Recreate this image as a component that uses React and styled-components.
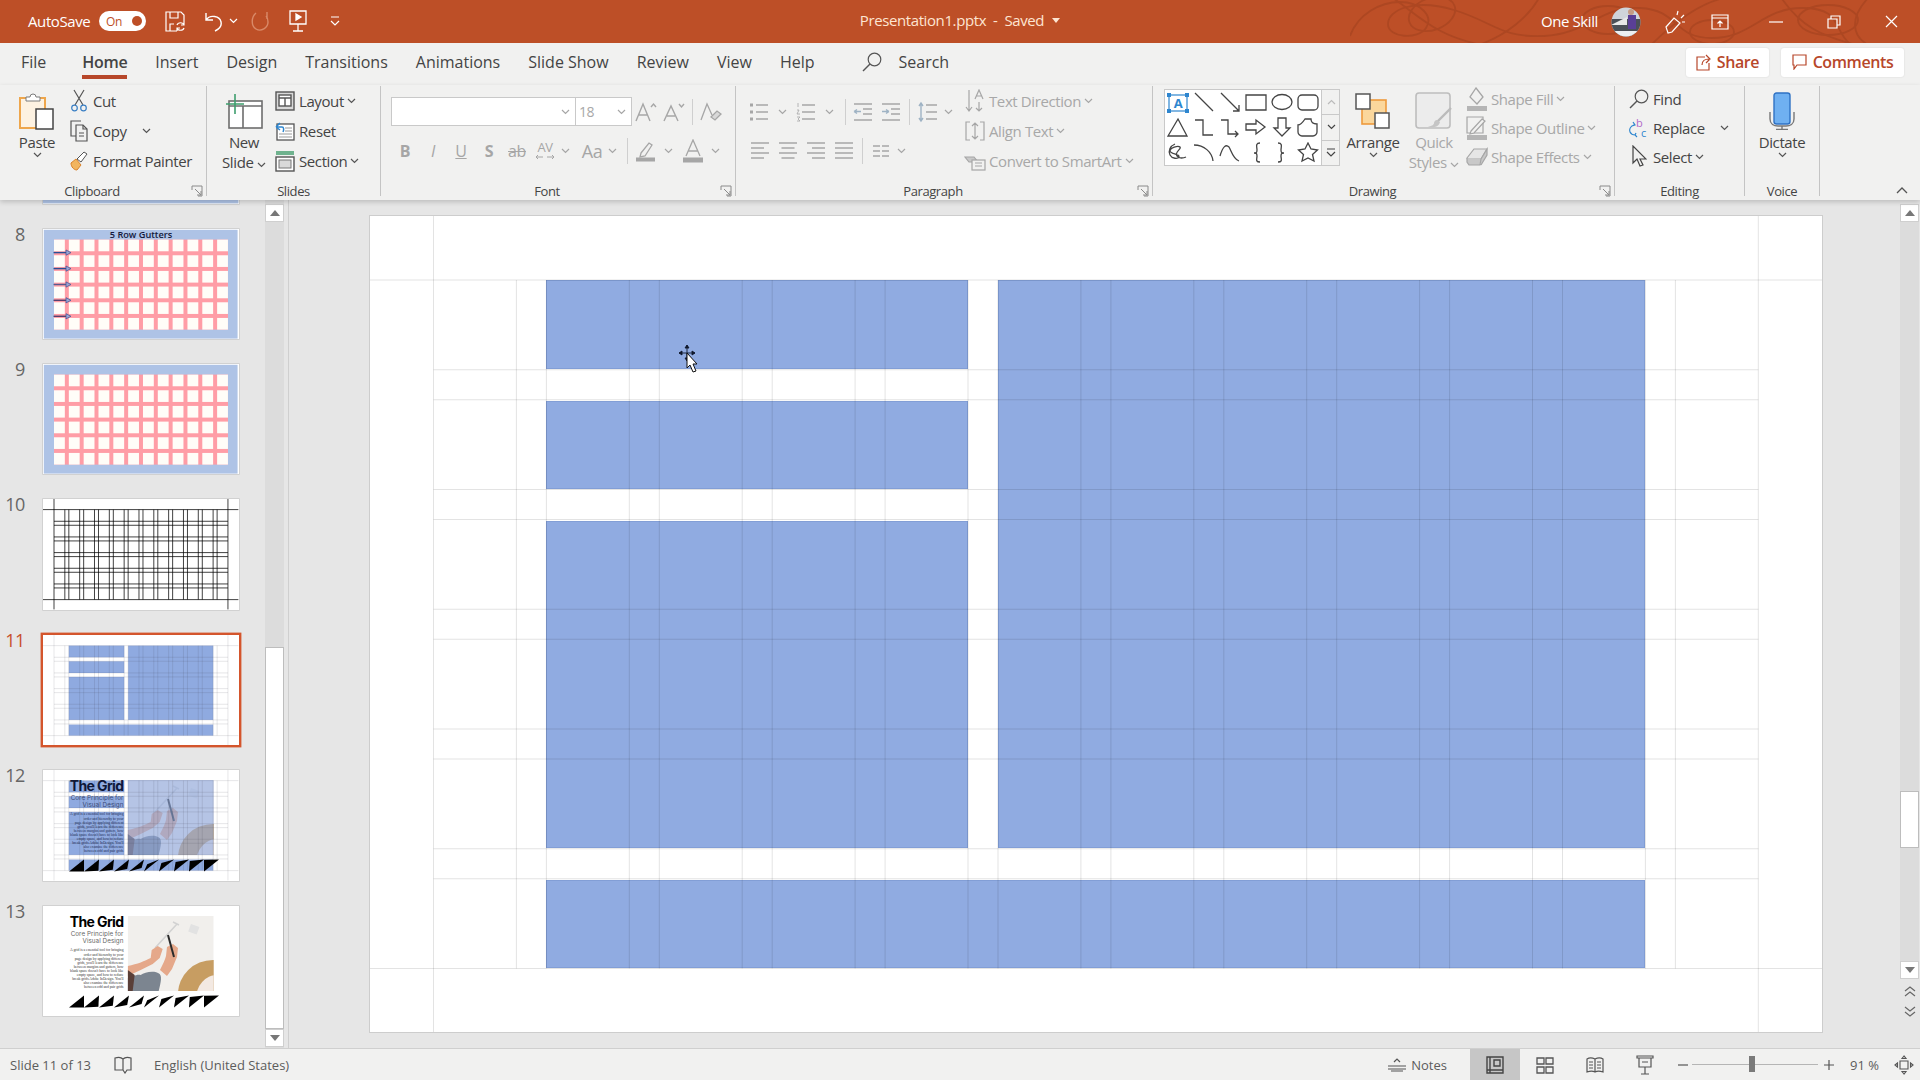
import React from 'react';
import styled, { createGlobalStyle } from 'styled-components';

const GlobalStyle = createGlobalStyle`
  html, body { margin: 0; padding: 0; overflow: hidden; background: #e6e6e6; }
  body { font-family: "Open Sans", "Noto Sans", sans-serif; letter-spacing: -0.025em; }
  * { box-sizing: border-box; }
`;

const Window = styled.div`
  width: 1920px;
  height: 1080px;
  display: flex;
  flex-direction: column;
  overflow: hidden;
`;

/* title bar */
const TitleBar = styled.header`
  position: relative;
  height: 43px;
  flex: none;
  background: #bd4f27;
  color: #fff;
  display: grid;
  grid-template-columns: 1fr auto 1fr;
  align-items: center;
`;
const TitleLeft = styled.div`
  display: flex;
  align-items: center;
  padding-left: 28px;
  margin-top: -1px;
`;
const TitleText = styled.div`
  font-size: 15px;
  color: #fde5d2;
  display: flex;
  align-items: center;
  gap: 8px;
  margin-top: -3px;
`;
const TitleRight = styled.div`
  height: 43px;
  display: flex;
  align-items: center;
  justify-content: flex-end;
`;
const AutoSaveLabel = styled.span`
  font-size: 15px;
  width: 71px;
`;
const Toggle = styled.div`
  width: 47px;
  height: 20px;
  border-radius: 10px;
  background: #fff;
  color: #bd4f27;
  font-size: 12px;
  display: flex;
  align-items: center;
  justify-content: space-between;
  padding: 0 4px 0 7px;
  &::after {
    content: '';
    width: 10px;
    height: 10px;
    border-radius: 50%;
    background: #bd4f27;
  }
`;
const QuickIcon = styled.div`
  margin-left: ${p => p.$ml}px;
  display: flex;
  align-items: center;
`;
const UserName = styled.span`
  position: relative;
  font-size: 15px;
  margin-right: 13px;
  margin-top: -2px;
`;
const TitleAction = styled.div`
  position: relative;
  width: ${p => p.$w}px;
  margin-left: ${p => p.$ml || 0}px;
  display: flex;
  justify-content: center;
`;
const PatternSvg = styled.svg`
  position: absolute;
  top: 0;
  right: 0;
`;

/* tabs */
const TabRow = styled.nav`
  height: 42px;
  flex: none;
  background: #f1f1f0;
  display: flex;
  align-items: center;
  padding: 0 16px 4px 21px;
  letter-spacing: 0;
`;
const Tab = styled.div`
  position: relative;
  font-size: 16px;
  color: #444;
  margin-right: ${p => p.$mr ?? 28}px;
  font-weight: ${p => p.$active ? 600 : 400};
  ${p => p.$active && `
    letter-spacing: -0.02em;
    &::after {
      content: '';
      position: absolute;
      left: 0;
      right: 0;
      bottom: -6px;
      height: 4px;
      background: #b7472a;
    }
  `}
`;
const SearchBox = styled.div`
  display: flex;
  align-items: center;
  gap: 17px;
  margin-left: 47px;
  font-size: 16px;
  color: #444;
`;
const HeadButtons = styled.div`
  margin-left: auto;
  display: flex;
  gap: 12px;
  letter-spacing: -0.025em;
`;
const HeadButton = styled.div`
  width: ${p => p.$w}px;
  height: 29px;
  background: #fff;
  border-radius: 3px;
  box-shadow: 0 0 2px rgba(0, 0, 0, .12);
  display: flex;
  align-items: center;
  justify-content: center;
  gap: 6px;
  color: #b7472a;
  font-size: 16px;
  font-weight: 600;
`;

/* ribbon */
const Ribbon = styled.section`
  position: relative;
  z-index: 2;
  height: 115px;
  flex: none;
  background: #f1f1f0;
  box-shadow: 0 2px 5px rgba(0, 0, 0, .18);
  display: flex;
  padding-top: 1px;
`;
const Group = styled.div`
  position: relative;
  width: ${p => p.$w}px;
  height: 110px;
  flex: none;
  border-right: 1px solid #c4c4c4;
  display: flex;
  flex-direction: column;
`;
const GroupBody = styled.div`
  height: 96px;
  display: flex;
  align-items: flex-start;
`;
const GroupLabel = styled.div`
  height: 14px;
  line-height: 18px;
  padding-right: ${p => p.$launch ? 22 : 0}px;
  text-align: center;
  font-size: 13px;
  color: #444;
  white-space: nowrap;
`;
const Launcher = styled.svg`
  position: absolute;
  right: 3px;
  bottom: -1px;
`;
const BigButton = styled.div`
  width: ${p => p.$w}px;
  margin-left: ${p => p.$ml || 0}px;
  padding-top: 6px;
  display: flex;
  flex-direction: column;
  align-items: center;
  flex: none;
  font-size: 15px;
  line-height: 20px;
  color: ${p => p.$off ? '#a8a8a8' : '#444'};
`;
const BigIcon = styled.div`
  height: 37px;
  margin-bottom: 3px;
  display: flex;
  align-items: center;
`;
const SmallColumn = styled.div`
  margin-left: ${p => p.$ml || 0}px;
  margin-top: ${p => p.$top ?? 0}px;
  flex: none;
  display: flex;
  flex-direction: column;
`;
const SmallRow = styled.div`
  height: ${p => p.$h || 30}px;
  display: flex;
  align-items: center;
  gap: 3px;
  font-size: 15px;
  white-space: nowrap;
  color: ${p => p.$off ? '#a8a8a8' : '#444'};
`;
const SmallIcon = styled.span`
  width: 22px;
  height: 22px;
  display: flex;
  align-items: center;
  justify-content: center;
  flex: none;
`;
const ChevronSvg = styled.svg`
  flex: none;
  color: ${p => p.$c || '#555'};
  margin-left: ${p => p.$ml || 0}px;
`;
const ToolRows = styled.div`
  flex: none;
  width: ${p => p.$w ? `${p.$w}px` : 'auto'};
  padding: 11px 0 0 ${p => p.$pl}px;
  display: flex;
  flex-direction: column;
  gap: 10px;
`;
const ToolRow = styled.div`
  height: 29px;
  display: flex;
  align-items: center;
`;
const FontBox = styled.div`
  width: ${p => p.$w}px;
  height: 29px;
  background: #fff;
  border: 1px solid #c9c9c9;
  margin-left: ${p => p.$ml || 0}px;
  display: flex;
  align-items: center;
  justify-content: space-between;
  padding: 0 5px 0 3px;
  font-size: 14px;
  color: #a8a8a8;
`;
const Tool = styled.div`
  width: ${p => p.$w || 28}px;
  height: 28px;
  margin-left: ${p => p.$ml || 0}px;
  flex: none;
  display: flex;
  flex-direction: column;
  align-items: center;
  justify-content: center;
  color: #a6a6a6;
  font-size: ${p => p.$fs || 16}px;
  line-height: ${p => p.$lh || 'normal'};
  font-weight: ${p => p.$b ? 700 : 400};
  font-style: ${p => p.$i ? 'italic' : 'normal'};
  text-decoration: ${p => p.$u ? 'underline' : p.$st ? 'line-through' : 'none'};
`;
const ToolSep = styled.div`
  width: 1px;
  height: 26px;
  margin-left: ${p => p.$ml || 0}px;
  flex: none;
  background: #cfcfcf;
`;
const Gallery = styled.div`
  margin: 3px 0 0 11px;
  width: 176px;
  height: 77px;
  flex: none;
  border: 1px solid #c9c9c9;
  display: flex;
  color: #444;
`;
const GalleryGrid = styled.div`
  flex: 1;
  background: #fff;
  display: grid;
  grid-template-columns: repeat(6, 26px);
  grid-auto-rows: 25px;
  place-items: center;
`;
const GalleryScroll = styled.div`
  width: 19px;
  flex: none;
  display: flex;
  flex-direction: column;
  border-left: 1px solid #c9c9c9;
`;
const GalleryStep = styled.div`
  flex: 1;
  display: flex;
  align-items: center;
  justify-content: center;
  & + & { border-top: 1px solid #c9c9c9; }
`;
const CollapseSlot = styled.div`
  flex: 1;
  display: flex;
  justify-content: flex-end;
  align-items: flex-end;
  padding: 0 12px 6px 0;
`;

/* work area */
const Workspace = styled.main`
  flex: 1;
  min-height: 0;
  display: flex;
  background: #e6e6e6;
`;
const SlidePane = styled.aside`
  width: 289px;
  flex: none;
  display: flex;
  border-right: 1px solid #cfcfcf;
  padding-right: 4px;
`;
const ThumbList = styled.div`
  flex: 1;
  overflow: hidden;
  display: flex;
  flex-direction: column;
  gap: 25px;
`;
const ThumbRow = styled.div`
  display: flex;
  flex: none;
  margin-top: ${p => p.$offset || 0}px;
`;
const ThumbNumber = styled.div`
  width: 25px;
  margin-right: 18.3px;
  text-align: right;
  font-size: 18px;
  line-height: 10px;
  color: ${p => p.$active ? '#c8502d' : '#666'};
`;
const ThumbFrame = styled.div`
  width: 195.4px;
  height: 110.4px;
  flex: none;
  background: #fff;
  box-shadow: ${p => p.$active
    ? '0 0 0 2.4px #d4552c'
    : '0 0 0 .7px #c8c8c8'};
`;
const ThumbSvg = styled.svg`
  display: block;
`;
const ScrollTrack = styled.div`
  width: 19px;
  flex: none;
  background: #dcdcdc;
  display: flex;
  flex-direction: column;
  padding-top: 4px;
`;
const ScrollButton = styled.div`
  height: 18px;
  flex: none;
  background: #fff;
  border: 1px solid #cfcfcf;
  display: flex;
  align-items: center;
  justify-content: center;
`;
const ScrollGap = styled.div`
  height: ${p => p.$h}px;
  flex: none;
`;
const ScrollThumb = styled.div`
  height: ${p => p.$h}px;
  flex: none;
  background: #fff;
  border: 1px solid #bdbdbd;
`;
const Stage = styled.div`
  flex: 1;
  padding: 15.5px 0 0 81px;
`;
const Slide = styled.div`
  position: relative;
  width: 1452px;
  height: 816.5px;
  background: #fff;
  box-shadow: 0 0 0 1px #cdcdcd;
  padding: 64px 63.5px;
  display: grid;
  grid-template-columns: repeat(12, 82.9px);
  grid-template-rows: repeat(6, 89.75px);
  gap: 30px;
`;
const Block = styled.div`
  grid-column: ${p => p.$col};
  grid-row: ${p => p.$row};
  margin-top: ${p => p.$inset ? 1.5 : 0}px;
  background: #90abe1;
  box-shadow: inset 0 0 0 1px rgba(100, 128, 190, .3);
`;
const GuideOverlay = styled.svg`
  position: absolute;
  inset: 0;
  pointer-events: none;
`;
const CursorSvg = styled.svg`
  position: absolute;
  left: 307px;
  top: 128px;
`;
const RightRail = styled.div`
  width: 20px;
  flex: none;
  display: flex;
  flex-direction: column;
  padding-top: 4px;
`;
const RailTrack = styled.div`
  background: #dcdcdc;
  width: 19px;
  display: flex;
  flex-direction: column;
`;
const PageJump = styled.div`
  display: flex;
  justify-content: center;
  width: 19px;
  margin-top: ${p => p.$mt}px;
`;

/* status bar */
const StatusBar = styled.footer`
  height: 32px;
  flex: none;
  background: #f1f1f0;
  border-top: 1px solid #cfcfcf;
  display: flex;
  align-items: center;
  font-size: 13px;
  letter-spacing: 0;
  color: #5c5c5c;
  padding: 0 6px 0 10px;
`;
const StatusItem = styled.div`
  margin-left: ${p => p.$ml || 0}px;
  display: flex;
  align-items: center;
  gap: 5px;
`;
const ViewButton = styled.div`
  width: ${p => p.$w || 50}px;
  height: 31px;
  margin-left: ${p => p.$ml || 0}px;
  display: flex;
  align-items: center;
  justify-content: center;
  background: ${p => p.$active ? '#c6c6c6' : 'transparent'};
`;
const StatusRight = styled.div`
  margin-left: auto;
  display: flex;
  align-items: center;
`;
const ZoomTrack = styled.div`
  position: relative;
  width: 126px;
  height: 1px;
  margin: 0 6px 0 4px;
  background: #b5b5b5;
`;
const ZoomHandle = styled.div`
  position: absolute;
  left: 57px;
  top: -8px;
  width: 6px;
  height: 16px;
  background: #7a7a7a;
`;

/* small shared drawings */
const Chevron = ({ c, ml }) => (
  <ChevronSvg width="9" height="6" viewBox="0 0 9 6" fill="none" stroke="currentColor" strokeWidth="1.2" $c={c} $ml={ml}>
    <path d="M1 1l3.5 3.5L8 1" />
  </ChevronSvg>
);
const Ico = ({ w = 18, h = 18, c = '#5f5f5f', sw = 1.2, children }) => (
  <svg width={w} height={h} viewBox={`0 0 ${w} ${h}`} fill="none" stroke={c} strokeWidth={sw}>{children}</svg>
);
const Corner = () => (
  <Launcher width="12" height="12" viewBox="0 0 12 12" fill="none" stroke="#8a8a8a">
    <path d="M1 5V1h10v10H7M4 4l6 6M10 6v4H6" />
  </Launcher>
);
const GRAY = '#a6a6a6';

const PasteIcon = () => (
  <svg width="36" height="38" viewBox="0 0 36 38" fill="none">
    <rect x="1" y="6" width="25" height="30" fill="#fdf2e2" stroke="#eea64c" strokeWidth="2" />
    <path d="M7 9V5h4a3 3 0 0 1 6 0h4v4z" fill="#fff" stroke="#7b7b7b" />
    <rect x="17" y="17" width="17" height="20" fill="#fff" stroke="#444" strokeWidth="1.5" />
  </svg>
);
const CutIcon = () => (
  <Ico w={16} h={24} c="#555">
    <path d="M3 1l9 15M13 1L4 16" />
    <circle cx="3.5" cy="19" r="2.8" stroke="#3a7fc4" />
    <circle cx="12.5" cy="19" r="2.8" stroke="#3a7fc4" />
  </Ico>
);
const CopyIcon = () => (
  <Ico w={20} h={22} c="#555">
    <path d="M12 1H2v15h5" />
    <path d="M7 5h7l4 4v12H7z" fill="#f1f1f0" />
    <path d="M14 5v4h4M10 13h5M10 16h5" />
  </Ico>
);
const PainterIcon = () => (
  <svg width="20" height="22" viewBox="0 0 20 22" fill="none">
    <path d="M2 13l5-4 5 6-4 5c-3 0-6-3-6-7z" fill="#f2b55f" stroke="#d9822b" />
    <path d="M8 9l7-7 3 2-6 8z" fill="#fff" stroke="#555" />
  </svg>
);
const NewSlideIcon = () => (
  <svg width="38" height="36" viewBox="0 0 38 36" fill="none">
    <rect x="4" y="8" width="33" height="27" fill="#fff" stroke="#6d6d6d" strokeWidth="1.6" />
    <path d="M4 13h33M18 13v22" stroke="#6d6d6d" strokeWidth="1.6" />
    <path d="M10 1v20M1 11h18" stroke="#3f9e6e" strokeWidth="1.6" />
  </svg>
);
const LayoutIcon = () => (
  <Ico w={20} h={20} c="#555" sw={1.4}>
    <rect x="1" y="1" width="18" height="18" fill="#d9d9d9" />
    <rect x="4" y="4" width="12" height="11" fill="#fff" />
    <path d="M4 7h12M10 7v8" />
  </Ico>
);
const ResetIcon = () => (
  <svg width="20" height="20" viewBox="0 0 20 20" fill="none">
    <rect x="2" y="3" width="17" height="16" fill="#fff" stroke="#555" strokeWidth="1.3" />
    <path d="M10 7h7M10 10h7M4 13h13M4 16h13" stroke="#999" />
    <path d="M1 6l4-4M1 6l4 3M1 6h6c2 0 2 3 1 5" stroke="#2e86cf" strokeWidth="1.5" />
  </svg>
);
const SectionIcon = () => (
  <svg width="20" height="22" viewBox="0 0 20 22" fill="none">
    <rect x="1" y="1" width="18" height="4" fill="#6fb28e" />
    <rect x="1" y="7" width="18" height="14" fill="#fff" stroke="#555" strokeWidth="1.4" />
    <rect x="4" y="10" width="12" height="8" fill="#d9d9d9" stroke="#777" />
  </svg>
);
const CapA = ({ up }) => (
  <svg width="24" height="22" viewBox="0 0 24 22" fill="none" stroke={GRAY} strokeWidth="1.4">
    <path d={up ? 'M2 20L9 3l7 17M5 14h8' : 'M2 20L9 5l7 15M5 15h8'} />
    <path d={up ? 'M17 6l2.5-3L22 6' : 'M17 3l2.5 3L22 3'} />
  </svg>
);
const ClearFormatIcon = () => (
  <svg width="22" height="20" viewBox="0 0 22 20" fill="none" stroke={GRAY} strokeWidth="1.3">
    <path d="M1 18L7 2l5 11" />
    <path d="M11 15l6-6 4 3-6 6z" fill="#d8d8d8" />
  </svg>
);
const KernArrows = () => (
  <svg width="20" height="6" viewBox="0 0 20 6" fill="none" stroke={GRAY}>
    <path d="M1 3h7M1 3l2-2M1 3l2 2M12 3h7M19 3l-2-2M19 3l-2 2" />
  </svg>
);
const HighlightIcon = () => (
  <svg width="22" height="22" viewBox="0 0 22 22" fill="none" stroke={GRAY} strokeWidth="1.3">
    <path d="M6 13l8-10 3 2-7 11-5 1z" />
    <rect x="1" y="17.5" width="19" height="4" fill={GRAY} stroke="none" />
  </svg>
);
const ColorAIcon = () => (
  <svg width="22" height="24" viewBox="0 0 22 24" fill="none" stroke={GRAY} strokeWidth="1.3">
    <path d="M4 17L11 1l7 16M6.5 12h9" />
    <rect x="1" y="18.5" width="20" height="5" fill={GRAY} stroke="none" />
  </svg>
);
const BulletsIcon = () => (
  <Ico w={20} h={20} c={GRAY} sw={1.5}>
    <path d="M7 3h12M7 10h12M7 17h12" />
    <path d="M1 3h3M1 10h3M1 17h3" strokeWidth="3" />
  </Ico>
);
const NumbersIcon = () => (
  <Ico w={20} h={20} c={GRAY} sw={1.5}>
    <path d="M6 3h13M6 10h13M6 17h13" />
    <path d="M2 1v4M1 8h2l-2 4h3M1 15h3l-2 2 2 2H1" strokeWidth=".8" />
  </Ico>
);
const IndentIcon = ({ rtl }) => (
  <Ico w={20} h={20} c={GRAY} sw={1.4}>
    <path d="M1 2h18M10 7h9M10 12h9M1 18h18" />
    <path d={rtl ? 'M8 9.5H1M1 9.5l3-2M1 9.5l3 2' : 'M1 9.5h7M8 9.5l-3-2M8 9.5l-3 2'} stroke="#9fb3c4" />
  </Ico>
);
const SpacingIcon = () => (
  <Ico w={20} h={22} c={GRAY} sw={1.4}>
    <path d="M8 4h11M8 11h11M8 18h11" />
    <path d="M3 2v18M1 5l2-3 2 3M1 17l2 3 2-3" stroke="#9fb3c4" />
  </Ico>
);
const AlignIcon = ({ mode }) => {
  const short = mode === 'justify' ? 0 : 5;
  const x = mode === 'left' ? 1 : mode === 'right' ? 1 + short : short / 2 + 1;
  return (
    <Ico w={20} h={20} c={GRAY} sw={1.4}>
      <path d={`M1 2h18M${x} 7h${18 - short}M1 12h18M${x} 17h${18 - short}`} />
    </Ico>
  );
};
const ColumnsIcon = () => (
  <Ico w={18} h={14} c={GRAY} sw={1.3}>
    <path d="M1 2h7M10 2h7M1 7h7M10 7h7M1 12h7M10 12h7" />
  </Ico>
);
const TextDirIcon = () => (
  <svg width="22" height="24" viewBox="0 0 22 24" fill="none" stroke={GRAY} strokeWidth="1.2">
    <path d="M5 1v20M2 18l3 4 3-4M15 13v9M12 19l3 3 3-3M11 10l4-9 4 9M12.5 7h5" />
  </svg>
);
const AlignTextIcon = () => (
  <Ico w={20} h={20} c={GRAY}>
    <path d="M5 1H1v18h4M15 1h4v18h-4M10 2v16M7 5l3-3 3 3M7 15l3 3 3-3" />
  </Ico>
);
const SmartArtIcon = () => (
  <svg width="22" height="20" viewBox="0 0 22 20" fill="none" stroke={GRAY} strokeWidth="1.2">
    <path d="M1 6h9l4 5H5z" fill="#c9c9c9" />
    <rect x="8" y="9" width="13" height="10" fill="#f1f1f0" />
    <path d="M11 12h7M11 15h7" />
  </svg>
);
const ArrangeIcon = () => (
  <svg width="36" height="36" viewBox="0 0 36 36" fill="none">
    <rect x="7" y="7" width="24" height="24" fill="#fbd79c" stroke="#ee9a3c" strokeWidth="1.6" />
    <rect x="1" y="1" width="14" height="15" fill="#fff" stroke="#555" strokeWidth="1.5" />
    <rect x="20" y="20" width="14" height="15" fill="#fff" stroke="#555" strokeWidth="1.5" />
  </svg>
);
const QuickStylesIcon = () => (
  <svg width="38" height="38" viewBox="0 0 38 38" fill="none">
    <rect x="1" y="1" width="34" height="35" rx="3" fill="#ececec" stroke="#bdbdbd" strokeWidth="1.6" />
    <path d="M36 16L22 30" stroke="#bbb" strokeWidth="2.4" />
    <path d="M22 28c-2 0-3 2-3 3 0 2-3 3-6 4 5 1 11 0 12-5z" fill="#c5c5c5" />
  </svg>
);
const FillIcon = () => (
  <svg width="22" height="24" viewBox="0 0 22 24" fill="none" stroke={GRAY} strokeWidth="1.3">
    <path d="M10 1l7 9-6 7-7-7z" />
    <rect x="1" y="19" width="20" height="5" fill="#b5b5b5" stroke="none" />
  </svg>
);
const OutlineIcon = () => (
  <svg width="22" height="24" viewBox="0 0 22 24" fill="none" stroke={GRAY} strokeWidth="1.2">
    <path d="M1 1h16v16H1z" />
    <path d="M5 15l11-12 3 2-11 12-4 1z" fill="#f1f1f0" />
    <rect x="1" y="19" width="20" height="5" fill="#b5b5b5" stroke="none" />
  </svg>
);
const EffectsIcon = () => (
  <svg width="22" height="20" viewBox="0 0 22 20" fill="none" stroke={GRAY} strokeWidth="1.2">
    <path d="M1 11l7-9h13l-6 10H2z" fill="#e6e6e6" />
    <path d="M1 11v4l2 3h11l1-6M15 12l6-10v6l-6 10" fill="#c8c8c8" />
  </svg>
);
const SearchGlass = ({ s = 20 }) => (
  <svg width={s} height={s} viewBox="0 0 20 20" fill="none" stroke="#555" strokeWidth="1.2">
    <circle cx="12.5" cy="7.5" r="6.3" />
    <path d="M8 12l-7 7" strokeWidth="1.5" />
  </svg>
);
const ReplaceIcon = () => (
  <svg width="22" height="26" viewBox="0 0 22 26" fill="none">
    <text x="8" y="12" fontSize="11" fill="#b36ac9" fontFamily="Open Sans">b</text>
    <text x="13" y="22" fontSize="11" fill="#2e86cf" fontFamily="Open Sans">c</text>
    <path d="M6 10c-4 1-5 5-4 7 1 2 3 3 5 3M5 7l2 3-3 1M8 18l-1 2 2 2" stroke="#2e86cf" strokeWidth="1.2" />
  </svg>
);
const SelectIcon = () => (
  <Ico w={16} h={24} c="#444">
    <path d="M2 1v17l4-4 3 7 3-1-3-6h6z" />
  </Ico>
);
const MicIcon = () => (
  <svg width="26" height="38" viewBox="0 0 26 38" fill="none">
    <rect x="5" y="1" width="16" height="31" rx="2.5" fill="#6fb0f1" stroke="#2f72c4" strokeWidth="1.4" />
    <path d="M1 20v7c0 5 4 7 8 7h8c4 0 8-2 8-7v-7" stroke="#777" strokeWidth="1.4" />
    <path d="M13 34v3M7 37.5h12" stroke="#777" strokeWidth="1.4" />
  </svg>
);

const shapes = [
  <svg key="a" width="24" height="22" viewBox="0 0 24 22" fill="none">
    <rect x="3" y="3" width="18" height="16" stroke="#2e86cf" strokeWidth="1.2" />
    <text x="12" y="16" textAnchor="middle" fontSize="13" fontWeight="700" fill="#2e86cf" fontFamily="Open Sans">A</text>
    <path d="M1 1h4v4H1zM19 1h4v4h-4zM1 17h4v4H1zM19 17h4v4h-4z" fill="#2e86cf" />
  </svg>,
  'M2 1l18 18', 'M2 1l18 18M20 13v6h-6', 'M1 3h20v15H1z',
  <ellipse key="o" cx="11" cy="10" rx="10" ry="7.5" />,
  <rect key="r" x="1" y="3" width="20" height="15" rx="4" />,
  'M11 2l9 17H1z', 'M2 3h8v15h10', 'M2 3h7v14h10M16 14l3 3-3 3',
  'M1 7h10V3l9 7-9 7v-4H1z', 'M7 1h8v10h4l-8 8-8-8h4z', 'M8 2h6c0 3 2 5 6 5v8c0 2-2 4-4 4H5c-2 0-4-2-4-4V8c3 0 5-3 7-6z',
  'M8 2C3 4 1 9 3 13c2 4 8 4 9 2 1-3-9-3-9-6 0-3 8-6 10-4 2 2-6 5-3 9 2 3 7 2 9 1',
  'M1 3c10 0 18 7 19 16', 'M1 14c3-10 6-12 9-9 2 3 4 12 10 14',
  'M15 1c-5 0-3 4-3 7s-1 3-3 3c2 0 3 0 3 3s-2 6 3 6',
  'M7 1c5 0 3 4 3 7s1 3 3 3c-2 0-3 0-3 3s2 6-3 6',
  'M11 1l3 6 6.5 1-5 4.5 1.5 6.5-6-3-6 3 1.5-6.5-5-4.5L8 7z',
];

/* slide guides */
const SLIDE_W = 1452;
const SLIDE_H = 816.5;
const slideGrid = { x0: 63.5, cw: 82.9, cg: 30, y0: 64, rh: 89.75, rg: 30 };
const thumbGrid = { x0: 11, cw: 10.83, cg: 4, y0: 10.6, rh: 11.67, rg: 4 };
const THUMB_W = 195.4;
const THUMB_H = 110.4;

const GridLines = ({ g, w, h, stroke, sw }) => {
  const xEnd = g.x0 + 12 * g.cw + 11 * g.cg;
  const yEnd = g.y0 + 6 * g.rh + 5 * g.rg;
  const lines = [];
  for (let i = 0; i < 12; i++) {
    const a = g.x0 + i * (g.cw + g.cg);
    if (i > 0) lines.push([a, g.y0, a, yEnd]);
    if (i < 11) lines.push([a + g.cw, g.y0, a + g.cw, yEnd]);
  }
  for (let j = 1; j < 6; j++) {
    const b = g.y0 + j * (g.rh + g.rg);
    lines.push([g.x0, b, xEnd, b]);
    lines.push([g.x0, b - g.rg, xEnd, b - g.rg]);
  }
  lines.push([g.x0, 0, g.x0, h], [xEnd, 0, xEnd, h], [0, g.y0, w, g.y0], [0, yEnd, w, yEnd]);
  return (
    <g stroke={stroke} strokeWidth={sw}>
      {lines.map((l, i) => <line key={i} x1={l[0]} y1={l[1]} x2={l[2]} y2={l[3]} />)}
    </g>
  );
};

const cellX = i => thumbGrid.x0 + i * (thumbGrid.cw + thumbGrid.cg);
const cellY = j => thumbGrid.y0 + j * (thumbGrid.rh + thumbGrid.rg);

const GutterGrid = () => (
  <>
    <rect x=".8" y=".8" width={THUMB_W - 1.6} height={THUMB_H - 1.6} fill="#aec3e6" />
    <rect x="11" y="10.6" width="174" height="90" fill="#ff9da6" />
    {Array.from({ length: 72 }, (_, n) => (
      <rect key={n} x={cellX(n % 12)} y={cellY(Math.floor(n / 12))} width={thumbGrid.cw} height={thumbGrid.rh} fill="#fffdf8" />
    ))}
  </>
);

const Blocks = () => (
  <g fill="#8faae0">
    <rect x="25.8" y="10.6" width="55.4" height="11.7" />
    <rect x="25.8" y="26.3" width="55.4" height="11.7" />
    <rect x="25.8" y="41.9" width="55.4" height="43" />
    <rect x="85.2" y="10.6" width="85" height="74.3" />
    <rect x="25.8" y="89.6" width="144.4" height="11" />
  </g>
);

const bodyLines = [
  'A grid is a essential tool for bringing',
  'order and hierarchy to your',
  'page design by applying different',
  'grids, you\'ll learn the difference',
  'between margins and gutters, how',
  'blank space doesn\'t have to look like',
  'empty space, and how to reduce',
  'break grids Adobe InDesign. You\'ll',
  'also examine the difference',
  'between odd and pair grids',
];

const GridText = ({ head, sub, body }) => (
  <g textAnchor="end">
    <text x="80.5" y="21" fontSize="14" fontWeight="700" fill={head} fontFamily="Inter" letterSpacing="-.6">The Grid</text>
    <text x="80.5" y="30.5" fontSize="6.3" fill={sub} fontFamily="Inter" letterSpacing=".05">Core Principle for</text>
    <text x="80.5" y="36.8" fontSize="6.3" fill={sub} fontFamily="Inter" letterSpacing=".05">Visual Design</text>
    {bodyLines.map((t, i) => (
      <text key={t} x="80.5" y={45.5 + i * 4.1} fontSize="3.7" fill={body} fontFamily="Liberation Serif" letterSpacing="-.02">{t}</text>
    ))}
  </g>
);

const Photo = ({ id, tint }) => (
  <g>
    <clipPath id={id}><rect x="84.7" y="10" width="86" height="75" /></clipPath>
    <g clipPath={`url(#${id})`}>
      <rect x="84.7" y="10" width="86" height="75" fill="#f1efec" />
      <path d="M112 42l22-24M130 16l6 3" stroke="#d2d2d2" strokeWidth="1.6" />
      <rect x="146" y="19" width="9" height="8" fill="#e2e2e2" transform="rotate(20 150 24)" />
      <path d="M84.7 60c10-2 17-5 23-8l1-8 6-4 5 3-3 9-7 6-12 6-13 6z" fill="#e5a88a" />
      <path d="M117 64c3-6 5-10 6-14l1-9 6-3 5 4-1 9-5 12-5 7z" fill="#e5a88a" />
      <path d="M125 29l6 22" stroke="#2b2b2b" strokeWidth="2" />
      <path d="M84.7 85V72c6-1 8-4 13-3 4-3 14-5 19-1 3 3 0 12-1 17z" fill="#7c8590" />
      <path d="M84.7 64l7 5-2 16h-5z" fill="#5a3f38" />
      <ellipse cx="170" cy="88" rx="35" ry="34" fill="#c79d62" />
      <ellipse cx="174" cy="93" rx="21" ry="24" fill="#f3e9e2" />
      {tint && <rect x="84.7" y="10" width="86" height="75" fill="#8faae0" opacity=".62" />}
    </g>
  </g>
);

const Sawtooth = () => {
  const points = Array.from({ length: 10 }, (_, i) => {
    const x = 26 + i * 15;
    const third = i < 5
      ? `${x + 15 - i * .6},${101.6 - i * .9}`
      : `${x + (9 - i) * .8},${89.8 + (9 - i) * 1.1}`;
    return `${x},101.6 ${x + 15},89.6 ${third}`;
  });
  return <g fill="#000">{points.map(p => <polygon key={p} points={p} />)}</g>;
};

const thumbArt = {
  7: <rect width={THUMB_W} height={THUMB_H} fill="#aec3e6" />,
  8: (
    <>
      <GutterGrid />
      <text x="98" y="9.2" fontSize="9.2" textAnchor="middle" fontWeight="600" fill="#14183c" fontFamily="Open Sans" letterSpacing="0">5 Row Gutters</text>
      {[23.6, 39.6, 55.5, 71.3, 87.3].map((y, i) => (
        <g key={y}>
          <path d={`M10.5 ${y}h13`} stroke={['#2a4f94', '#2a4f94', '#5b5a8e', '#56406e', '#56406e'][i]} strokeWidth="1.4" />
          <path d={`M23 ${y - 2.6}l5 2.6-5 2.6z`} fill="#9aa7d6" stroke="#3c4f90" strokeWidth=".7" />
        </g>
      ))}
    </>
  ),
  9: <GutterGrid />,
  10: <GridLines g={thumbGrid} w={THUMB_W} h={THUMB_H} stroke="#000" sw=".75" />,
  11: (
    <>
      <Blocks />
      <GridLines g={thumbGrid} w={THUMB_W} h={THUMB_H} stroke="rgba(60,60,80,.22)" sw=".6" />
    </>
  ),
  12: (
    <>
      <Blocks />
      <Photo id="photo-tint" tint />
      <GridText head="#0e1738" sub="#3c4a78" body="#1d2a55" />
      <GridLines g={thumbGrid} w={THUMB_W} h={THUMB_H} stroke="rgba(60,60,80,.22)" sw=".6" />
      <Sawtooth />
    </>
  ),
  13: (
    <>
      <Photo id="photo-full" />
      <GridText head="#000" sub="#666" body="#333" />
      <Sawtooth />
    </>
  ),
};

const Thumb = ({ n }) => (
  <ThumbFrame $active={n === 11}>
    <ThumbSvg width={THUMB_W} height={THUMB_H} viewBox={`0 0 ${THUMB_W} ${THUMB_H}`}>
      {thumbArt[n]}
    </ThumbSvg>
  </ThumbFrame>
);

const ArrowUp = () => (
  <svg width="10" height="6" viewBox="0 0 10 6"><path d="M0 6l5-6 5 6z" fill="#777" /></svg>
);
const ArrowDown = () => (
  <svg width="10" height="6" viewBox="0 0 10 6"><path d="M0 0l5 6 5-6z" fill="#777" /></svg>
);

const App = () => (
  <Window>
    <GlobalStyle />
    <TitleBar>
      <TitleLeft>
        <AutoSaveLabel>AutoSave</AutoSaveLabel>
        <Toggle>On</Toggle>
        <QuickIcon $ml={19}>
          <Ico w={20} h={21} c="#fff">
            <path d="M12 20H1V1h15l3 3v7" />
            <path d="M5 1v6h8V1M5 20v-7h4" />
            <path d="M12 14c1-3 6-3 7 0M19 17c-1 3-6 3-7 0M19 11v3h-3M12 20v-3h3" />
          </Ico>
        </QuickIcon>
        <QuickIcon $ml={18}>
          <Ico w={20} h={22} c="#fff" sw={1.4}>
            <path d="M3 3v7h7M3 10c4-6 14-4 15 2 1 4-2 7-6 9" />
          </Ico>
        </QuickIcon>
        <QuickIcon $ml={6}><Chevron c="#fff" /></QuickIcon>
        <QuickIcon $ml={12}>
          <Ico w={20} h={22} c="#d98a69" sw={1.4}>
            <path d="M17 2v7M6 3C1 7 1 16 6 19c5 3 12-1 12-7 0-3-1-5-2-6" />
          </Ico>
        </QuickIcon>
        <QuickIcon $ml={18}>
          <Ico w={20} h={22} c="#fff" sw={1.3}>
            <path d="M2 1h16v13H2zM10 14v7M5 21h10" />
            <path d="M8 4l5 3-5 3z" fill="#fff" />
          </Ico>
        </QuickIcon>
        <QuickIcon $ml={22}>
          <Ico w={10} h={12} c="#fff">
            <path d="M1 2h8M1 6l4 4 4-4" />
          </Ico>
        </QuickIcon>
      </TitleLeft>
      <TitleText>
        <span>Presentation1.pptx&nbsp; - &nbsp;Saved</span>
        <svg width="8" height="5" viewBox="0 0 8 5"><path d="M0 0h8L4 5z" fill="#fde5d2" /></svg>
      </TitleText>
      <TitleRight>
        <PatternSvg width="570" height="43" viewBox="0 0 570 43" fill="none" stroke="#ad4722" strokeWidth="1.8">
          <path d="M0 36C8 14 30 2 50 2s34 14 26 26-38 10-38-4 26-26 66-14 46 28 90 26 56-30 96-28 32 30 72 30 50-30 90-30 30 20 48 36" />
          <path d="M40-4c30 20 44 40 96 50M190-4c-10 20-34 40-64 50M300 46c30-30 60-50 90-50M430-4c20 30 40 40 80 50M520-4c-20 20-20 40 0 50" />
          <ellipse cx="82" cy="14" rx="24" ry="16" transform="rotate(-20 82 14)" />
          <ellipse cx="258" cy="20" rx="26" ry="14" />
          <ellipse cx="362" cy="32" rx="22" ry="12" />
          <ellipse cx="478" cy="20" rx="30" ry="15" />
        </PatternSvg>
        <UserName>One Skill</UserName>
        <TitleAction $w={30}>
          <svg width="30" height="30" viewBox="0 0 30 30">
            <clipPath id="avatar"><circle cx="15" cy="15" r="14.5" /></clipPath>
            <g clipPath="url(#avatar)">
              <rect width="30" height="30" fill="#cfd4da" />
              <rect y="12" width="30" height="18" fill="#4b5058" />
              <path d="M0 18l16-8v8z" fill="#e8e8e8" />
              <path d="M17 8h8v14h-8z" fill="#5a3f96" />
              <circle cx="20" cy="5" r="3" fill="#c59b84" />
              <rect y="24" width="30" height="6" fill="#eceff2" />
            </g>
          </svg>
        </TitleAction>
        <TitleAction $w={36} $ml={15}>
          <Ico w={22} h={24} c="#fff">
            <path d="M3 17L11 8l6 5-8 9-4 1z" />
            <path d="M14 5l1-4M18 8l3-3M19 12h3" />
          </Ico>
        </TitleAction>
        <TitleAction $w={55}>
          <Ico w={18} h={16} c="#fff">
            <path d="M1 1h16v14H1zM1 4h16M9 13V7M6.5 9.5L9 7l2.5 2.5" />
          </Ico>
        </TitleAction>
        <TitleAction $w={58}>
          <Ico w={14} h={4} c="#fff"><path d="M0 2h14" /></Ico>
        </TitleAction>
        <TitleAction $w={57}>
          <Ico w={14} h={14} c="#fff"><path d="M1 4h9v9H1zM4 4V1h9v9h-3" /></Ico>
        </TitleAction>
        <TitleAction $w={58}>
          <Ico w={13} h={13} c="#fff"><path d="M1 1l11 11M12 1L1 12" /></Ico>
        </TitleAction>
      </TitleRight>
    </TitleBar>

    <TabRow>
      <Tab $mr={36}>File</Tab>
      <Tab $active>Home</Tab>
      <Tab>Insert</Tab>
      <Tab>Design</Tab>
      <Tab>Transitions</Tab>
      <Tab>Animations</Tab>
      <Tab>Slide Show</Tab>
      <Tab>Review</Tab>
      <Tab>View</Tab>
      <Tab $mr={0}>Help</Tab>
      <SearchBox><SearchGlass />Search</SearchBox>
      <HeadButtons>
        <HeadButton $w={83}>
          <Ico w={15} h={17} c="#b7472a">
            <path d="M9 3H1v13h12V9M6 11c0-4 3-6 7-6M10 1l4 4-4 4" />
          </Ico>
          Share
        </HeadButton>
        <HeadButton $w={123}>
          <Ico w={15} h={16} c="#b7472a">
            <path d="M1 1h13v10H5l-3 4v-4H1z" />
          </Ico>
          Comments
        </HeadButton>
      </HeadButtons>
    </TabRow>

    <Ribbon>
      <Group $w={207}>
        <GroupBody>
          <BigButton $w={58} $ml={8}>
            <BigIcon><PasteIcon /></BigIcon>
            Paste
            <Chevron />
          </BigButton>
          <SmallColumn $ml={2}>
            <SmallRow><SmallIcon><CutIcon /></SmallIcon>Cut</SmallRow>
            <SmallRow><SmallIcon><CopyIcon /></SmallIcon>Copy<Chevron ml={12} /></SmallRow>
            <SmallRow><SmallIcon><PainterIcon /></SmallIcon>Format Painter</SmallRow>
          </SmallColumn>
        </GroupBody>
        <GroupLabel $launch>Clipboard</GroupLabel>
        <Corner />
      </Group>

      <Group $w={174}>
        <GroupBody>
          <BigButton $w={54} $ml={10}>
            <BigIcon><NewSlideIcon /></BigIcon>
            New
            <span>Slide <Chevron /></span>
          </BigButton>
          <SmallColumn $ml={3}>
            <SmallRow><SmallIcon><LayoutIcon /></SmallIcon>Layout<Chevron /></SmallRow>
            <SmallRow><SmallIcon><ResetIcon /></SmallIcon>Reset</SmallRow>
            <SmallRow><SmallIcon><SectionIcon /></SmallIcon>Section<Chevron /></SmallRow>
          </SmallColumn>
        </GroupBody>
        <GroupLabel>Slides</GroupLabel>
      </Group>

      <Group $w={355}>
        <GroupBody>
          <ToolRows $pl={10}>
            <ToolRow>
              <FontBox $w={185}><span /><Chevron c={GRAY} /></FontBox>
              <FontBox $w={57} $ml={-1}>18<Chevron c={GRAY} /></FontBox>
              <Tool><CapA up /></Tool>
              <Tool><CapA /></Tool>
              <ToolSep $ml={4} />
              <Tool $w={32} $ml={2}><ClearFormatIcon /></Tool>
            </ToolRow>
            <ToolRow>
              <Tool $b>B</Tool>
              <Tool $i>I</Tool>
              <Tool $u>U</Tool>
              <Tool $b>S</Tool>
              <Tool $st>ab</Tool>
              <Tool $fs={13} $lh="13px">AV<KernArrows /></Tool>
              <Tool $w={12}><Chevron c={GRAY} /></Tool>
              <Tool $ml={7} $fs={18}>Aa</Tool>
              <Tool $w={12}><Chevron c={GRAY} /></Tool>
              <ToolSep $ml={9} />
              <Tool $ml={4}><HighlightIcon /></Tool>
              <Tool $w={12} $ml={2}><Chevron c={GRAY} /></Tool>
              <Tool $ml={5}><ColorAIcon /></Tool>
              <Tool $w={12} $ml={2}><Chevron c={GRAY} /></Tool>
            </ToolRow>
          </ToolRows>
        </GroupBody>
        <GroupLabel $launch>Font</GroupLabel>
        <Corner />
      </Group>

      <Group $w={417}>
        <GroupBody>
          <ToolRows $w={228} $pl={9}>
            <ToolRow>
              <Tool><BulletsIcon /></Tool>
              <Tool $w={12} $ml={3}><Chevron c={GRAY} /></Tool>
              <Tool $ml={4}><NumbersIcon /></Tool>
              <Tool $w={12} $ml={3}><Chevron c={GRAY} /></Tool>
              <ToolSep $ml={10} />
              <Tool $ml={3}><IndentIcon rtl /></Tool>
              <Tool><IndentIcon /></Tool>
              <ToolSep $ml={4} />
              <Tool $ml={4}><SpacingIcon /></Tool>
              <Tool $w={12}><Chevron c={GRAY} /></Tool>
            </ToolRow>
            <ToolRow>
              <Tool $ml={1}><AlignIcon mode="left" /></Tool>
              <Tool><AlignIcon mode="center" /></Tool>
              <Tool><AlignIcon mode="right" /></Tool>
              <Tool><AlignIcon mode="justify" /></Tool>
              <ToolSep $ml={4} />
              <Tool $ml={4}><ColumnsIcon /></Tool>
              <Tool $w={12}><Chevron c={GRAY} /></Tool>
            </ToolRow>
          </ToolRows>
          <SmallColumn>
            <SmallRow $off><SmallIcon><TextDirIcon /></SmallIcon>Text Direction<Chevron c={GRAY} /></SmallRow>
            <SmallRow $off><SmallIcon><AlignTextIcon /></SmallIcon>Align Text<Chevron c={GRAY} /></SmallRow>
            <SmallRow $off><SmallIcon><SmartArtIcon /></SmallIcon>Convert to SmartArt<Chevron c={GRAY} /></SmallRow>
          </SmallColumn>
        </GroupBody>
        <GroupLabel $launch>Paragraph</GroupLabel>
        <Corner />
      </Group>

      <Group $w={462}>
        <GroupBody>
          <Gallery>
            <GalleryGrid>
              {shapes.map((s, i) => (
                typeof s === 'string'
                  ? <Ico key={i} w={22} h={21} c="#444" sw={1.3}><path d={s} /></Ico>
                  : i === 0 ? s : <Ico key={i} w={22} h={21} c="#444" sw={1.3}>{s}</Ico>
              ))}
            </GalleryGrid>
            <GalleryScroll>
              <GalleryStep>
                <svg width="9" height="6" viewBox="0 0 9 6" fill="none" stroke="#bbb" strokeWidth="1.2"><path d="M1 5l3.5-3.5L8 5" /></svg>
              </GalleryStep>
              <GalleryStep><Chevron c="#444" /></GalleryStep>
              <GalleryStep>
                <Ico w={10} h={10} c="#444"><path d="M1 1h8M1 4l4 4 4-4" /></Ico>
              </GalleryStep>
            </GalleryScroll>
          </Gallery>
          <BigButton $w={60} $ml={3}>
            <BigIcon><ArrangeIcon /></BigIcon>
            Arrange
            <Chevron />
          </BigButton>
          <BigButton $w={60} $ml={1} $off>
            <BigIcon><QuickStylesIcon /></BigIcon>
            Quick
            <span>Styles <Chevron c={GRAY} /></span>
          </BigButton>
          <SmallColumn $ml={2} $top={-2}>
            <SmallRow $h={29.4} $off><SmallIcon><FillIcon /></SmallIcon>Shape Fill<Chevron c={GRAY} /></SmallRow>
            <SmallRow $h={29.4} $off><SmallIcon><OutlineIcon /></SmallIcon>Shape Outline<Chevron c={GRAY} /></SmallRow>
            <SmallRow $h={29.4} $off><SmallIcon><EffectsIcon /></SmallIcon>Shape Effects<Chevron c={GRAY} /></SmallRow>
          </SmallColumn>
        </GroupBody>
        <GroupLabel $launch>Drawing</GroupLabel>
        <Corner />
      </Group>

      <Group $w={130}>
        <GroupBody>
          <SmallColumn $ml={13} $top={-2}>
            <SmallRow $h={29.4}><SmallIcon><SearchGlass /></SmallIcon>Find</SmallRow>
            <SmallRow $h={29.4}><SmallIcon><ReplaceIcon /></SmallIcon>Replace<Chevron ml={12} /></SmallRow>
            <SmallRow $h={29.4}><SmallIcon><SelectIcon /></SmallIcon>Select<Chevron /></SmallRow>
          </SmallColumn>
        </GroupBody>
        <GroupLabel>Editing</GroupLabel>
      </Group>

      <Group $w={75}>
        <GroupBody>
          <BigButton $w={74}>
            <BigIcon><MicIcon /></BigIcon>
            Dictate
            <Chevron />
          </BigButton>
        </GroupBody>
        <GroupLabel>Voice</GroupLabel>
      </Group>

      <CollapseSlot>
        <svg width="12" height="7" viewBox="0 0 12 7" fill="none" stroke="#555" strokeWidth="1.3"><path d="M1 6l5-5 5 5" /></svg>
      </CollapseSlot>
    </Ribbon>

    <Workspace>
      <SlidePane>
        <ThumbList>
          {[7, 8, 9, 10, 11, 12, 13].map(n => (
            <ThumbRow key={n} $offset={n === 7 ? -106.7 : 0}>
              <ThumbNumber $active={n === 11}>{n === 7 ? '' : n}</ThumbNumber>
              <Thumb n={n} />
            </ThumbRow>
          ))}
        </ThumbList>
        <ScrollTrack>
          <ScrollButton><ArrowUp /></ScrollButton>
          <ScrollGap $h={425} />
          <ScrollThumb $h={382} />
          <ScrollButton><ArrowDown /></ScrollButton>
        </ScrollTrack>
      </SlidePane>

      <Stage>
        <Slide>
          <Block $col="2 / span 4" $row="1" />
          <Block $col="2 / span 4" $row="2" $inset />
          <Block $col="2 / span 4" $row="3 / span 3" $inset />
          <Block $col="6 / span 6" $row="1 / span 5" />
          <Block $col="2 / span 10" $row="6" $inset />
          <GuideOverlay width={SLIDE_W} height={SLIDE_H} viewBox={`0 0 ${SLIDE_W} ${SLIDE_H}`}>
            <GridLines g={slideGrid} w={SLIDE_W} h={SLIDE_H} stroke="rgba(0,0,0,.11)" sw="1" />
          </GuideOverlay>
          <CursorSvg width="22" height="32" viewBox="0 0 22 32">
            <path d="M10 1v16M2 9h16M10 1L8 4h4zM10 17l-2-3h4zM2 9l3-2v4zM18 9l-3-2v4z" fill="#10182c" stroke="#10182c" strokeWidth=".9" />
            <path d="M10 9v15l3-3 3 7 3-1-3-7h4z" fill="#fff" stroke="#111" strokeWidth="1" />
          </CursorSvg>
        </Slide>
      </Stage>

      <RightRail>
        <RailTrack>
          <ScrollButton><ArrowUp /></ScrollButton>
          <ScrollGap $h={569} />
          <ScrollThumb $h={57} />
          <ScrollGap $h={113} />
          <ScrollButton><ArrowDown /></ScrollButton>
        </RailTrack>
        <PageJump $mt={6}>
          <Ico w={12} h={12} c="#666"><path d="M1 6l5-4 5 4M1 11l5-4 5 4" /></Ico>
        </PageJump>
        <PageJump $mt={9}>
          <Ico w={12} h={12} c="#666"><path d="M1 1l5 4 5-4M1 6l5 4 5-4" /></Ico>
        </PageJump>
      </RightRail>
    </Workspace>

    <StatusBar>
      <StatusItem>Slide 11 of 13</StatusItem>
      <StatusItem $ml={23}>
        <Ico w={18} h={18} c="#555">
          <path d="M1 2c3-1 6-1 8 1 2-2 5-2 8-1v12h-4l-2 3-2-3H1zM9 3v11" />
        </Ico>
      </StatusItem>
      <StatusItem $ml={22}>English (United States)</StatusItem>
      <StatusRight>
        <StatusItem>
          <Ico w={18} h={14} c="#555"><path d="M0 8h18M0 11h18M3 13h12M6 4l3-3 3 3" /></Ico>
          Notes
        </StatusItem>
        <ViewButton $active $ml={23}>
          <Ico w={18} h={18} c="#444" sw={1.4}>
            <path d="M1 1h16v16H1zM4 1v16M1 14h16M8 4h6v6H8z" />
          </Ico>
        </ViewButton>
        <ViewButton>
          <Ico w={18} h={18} c="#555" sw={1.3}>
            <path d="M1 2h7v6H1zM10 2h7v6h-7zM1 11h7v6H1zM10 11h7v6h-7z" />
          </Ico>
        </ViewButton>
        <ViewButton>
          <Ico w={18} h={18} c="#555">
            <path d="M1 3c3-2 6-1 8 0 2-1 5-2 8 0v13c-3-1-6-1-8 0-2-1-5-1-8 0zM9 3v13M3 6h4M3 9h4M3 12h4M11 6h4M11 9h4M11 12h4" />
          </Ico>
        </ViewButton>
        <ViewButton>
          <Ico w={18} h={20} c="#555"><path d="M1 1h16v2H1zM3 3v9h12V3M9 12v7M5 19h8M6 7h6" /></Ico>
        </ViewButton>
        <StatusItem $ml={8}>
          <Ico w={10} h={10} c="#555"><path d="M0 5h10" /></Ico>
        </StatusItem>
        <ZoomTrack><ZoomHandle /></ZoomTrack>
        <StatusItem>
          <Ico w={10} h={10} c="#555"><path d="M0 5h10M5 0v10" /></Ico>
        </StatusItem>
        <StatusItem $ml={16}>91 %</StatusItem>
        <StatusItem $ml={15}>
          <Ico w={20} h={20} c="#555" sw={1.1}>
            <path d="M6 6h8v8H6zM10 1l-2 2.5h4zM10 19l-2-2.5h4zM1 10l2.5-2v4zM19 10l-2.5-2v4z" />
          </Ico>
        </StatusItem>
      </StatusRight>
    </StatusBar>
  </Window>
);

export default App;
